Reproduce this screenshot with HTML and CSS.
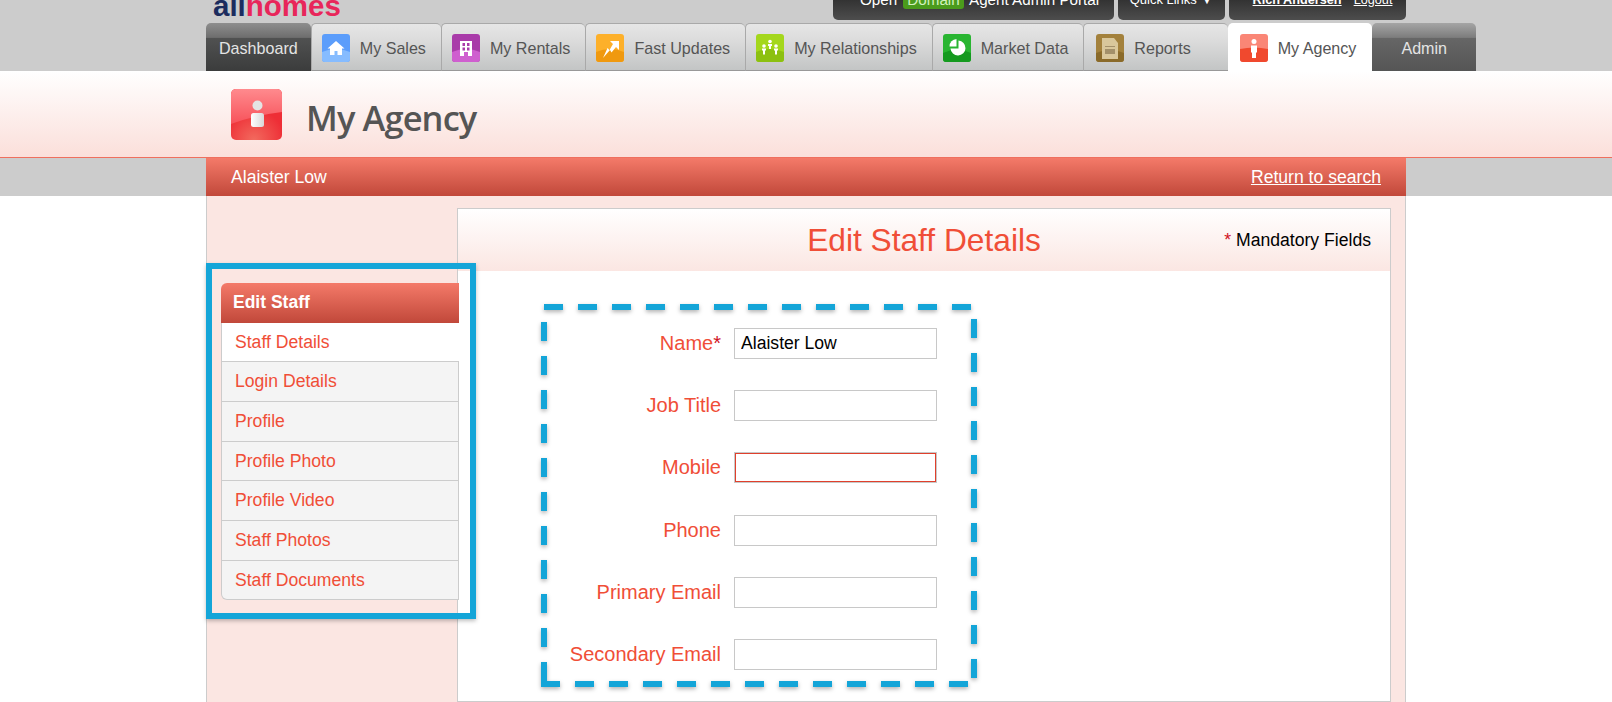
FILE: index.html
```html
<!DOCTYPE html>
<html lang="en">
<head>
  <meta charset="UTF-8">
  <meta name="viewport" content="width=device-width, initial-scale=1.0">
  <title>Edit Staff Details</title>
  <link rel="stylesheet" href="styles.css">
</head>
<body>
  <!-- Top grey bar -->
  <header class="topbar">
    <div class="wrap">
      <div class="toprow">
        <div class="logo"><span class="logo-all">all</span><span class="logo-homes">homes</span></div>
        <div class="toplinks">
          <a class="pill pill-portal" href="#">Open <span class="domain">Domain</span> Agent Admin Portal</a>
          <a class="pill pill-quick" href="#">Quick Links &#9660;</a>
          <div class="pill pill-user"><a class="user-name" href="#">Rich Andersen</a><a href="#">Logout</a></div>
        </div>
      </div>
      <nav class="tabs">
        <a class="tab tab-dark tab-dashboard" href="#">Dashboard</a>
        <a class="tab" href="#">
          <svg class="icon" viewBox="0 0 28 28"><rect width="28" height="28" rx="3" fill="#5b9dfb"/><path d="M0 18Q14 12 28 18V25a3 3 0 0 1-3 3H3a3 3 0 0 1-3-3Z" fill="#86bcff"/><path d="M14 7 5.500 14.500H8V21h4.500v-4h3v4H20v-6.500h2.500Z" fill="#fff"/></svg>
          My Sales
        </a>
        <a class="tab" href="#">
          <svg class="icon" viewBox="0 0 28 28"><rect width="28" height="28" rx="3" fill="#a93ba9"/><path d="M0 18Q14 12 28 18V25a3 3 0 0 1-3 3H3a3 3 0 0 1-3-3Z" fill="#cf5fcf"/><path d="M8 7H20V22H16V18H12V22H8Z" fill="#fff"/><path d="M10.500 9h2.500v3h-2.500ZM15 9h2.500v3H15ZM10.500 13.500h2.500v3h-2.500ZM15 13.500h2.500v3H15Z" fill="#a93ba9"/></svg>
          My Rentals
        </a>
        <a class="tab" href="#">
          <svg class="icon" viewBox="0 0 28 28"><rect width="28" height="28" rx="3" fill="#fdb02a"/><path d="M0 18Q14 12 28 18V25a3 3 0 0 1-3 3H3a3 3 0 0 1-3-3Z" fill="#f0990f"/><path d="M14 7H23V16L20 13 15.500 18.500 14 16 7 24 11.500 14 13.500 16 17 10Z" fill="#fff"/></svg>
          Fast Updates
        </a>
        <a class="tab" href="#">
          <svg class="icon" viewBox="0 0 28 28"><rect width="28" height="28" rx="3" fill="#a4d71c"/><path d="M0 18Q14 12 28 18V25a3 3 0 0 1-3 3H3a3 3 0 0 1-3-3Z" fill="#8cc010"/><g fill="#fff"><circle cx="14" cy="7.500" r="1.800"/><path d="M12 10h4v2h-1v3h-2v-3h-1Z"/><circle cx="8" cy="12" r="1.800"/><path d="M6 14.500h4v2H9v4H7v-4H6Z"/><circle cx="20" cy="12" r="1.800"/><path d="M18 14.500h4v2h-1v4h-2v-4h-1Z"/></g></svg>
          My Relationships
        </a>
        <a class="tab" href="#">
          <svg class="icon" viewBox="0 0 28 28"><rect width="28" height="28" rx="3" fill="#29b531"/><path d="M0 19Q14 12 28 19V25a3 3 0 0 1-3 3H3a3 3 0 0 1-3-3Z" fill="#159a1f"/><path d="M15.500 6.500A7.500 7.500 0 1 1 7.500 14.500H15.500Z" fill="#fff"/><path d="M13.500 5A7.500 7.500 0 0 0 6.500 12.500H13.500Z" fill="#fff"/></svg>
          Market Data
        </a>
        <a class="tab tab-reports" href="#">
          <svg class="icon" viewBox="0 0 28 28"><rect width="28" height="28" rx="3" fill="#a3813c"/><path d="M0 19Q14 13 28 19V25a3 3 0 0 1-3 3H3a3 3 0 0 1-3-3Z" fill="#8a6a2a"/><path d="M6 4H18L22 9V25H6Z" fill="#d9c79b"/><path d="M9 12h10v1H9ZM9 15h10v5H9Z" fill="#a3906a"/></svg>
          Reports
        </a>
        <a class="tab tab-active" href="#">
          <svg class="icon" viewBox="0 0 28 28"><rect width="28" height="28" rx="3" fill="#fa8676"/><path d="M0 15Q14 12 28 15V25a3 3 0 0 1-3 3H3a3 3 0 0 1-3-3Z" fill="#f0492e"/><circle cx="14" cy="7.500" r="2.500" fill="#fff"/><path d="M11 11.500h6v7h-1V24h-4v-5.500h-1Z" fill="#fff"/></svg>
          My Agency
        </a>
        <a class="tab tab-dark tab-admin" href="#">Admin</a>
      </nav>
    </div>
  </header>

  <!-- Section banner -->
  <div class="banner">
    <div class="wrap banner-inner">
      <svg class="banner-icon" viewBox="0 0 51 51">
        <defs>
          <linearGradient id="agency-top" x1="0" y1="0" x2="0" y2="1"><stop offset="0" stop-color="#ff8a8e"/><stop offset="1" stop-color="#f7525a"/></linearGradient>
          <radialGradient id="agency-glow" cx=".45" cy="1" r=".6"><stop offset="0" stop-color="#f26a5e"/><stop offset="1" stop-color="#ee2e36"/></radialGradient>
          <linearGradient id="agency-body" x1="0" y1="0" x2="1" y2="0"><stop offset="0" stop-color="#fff"/><stop offset="1" stop-color="#d8d8d8"/></linearGradient>
        </defs>
        <rect width="51" height="51" rx="5" fill="url(#agency-glow)"/>
        <path d="M0 5a5 5 0 0 1 5-5H46a5 5 0 0 1 5 5V23Q25 26 0 35Z" fill="url(#agency-top)"/>
        <circle cx="26.500" cy="16.500" r="5" fill="#e4e4e4"/>
        <rect x="20" y="24" width="13" height="14" rx="2.500" fill="url(#agency-body)"/>
      </svg>
      <h1 class="banner-title">My Agency</h1>
    </div>
  </div>

  <!-- Red title bar -->
  <div class="subbar">
    <div class="wrap subbar-inner">
      <span>Alaister Low</span>
      <a href="#">Return to search</a>
    </div>
  </div>

  <div class="wrap content">
    <aside class="side">
      <div class="menu">
        <div class="menu-head">Edit Staff</div>
        <a class="menu-item menu-current" href="#">Staff Details</a>
        <a class="menu-item" href="#">Login Details</a>
        <a class="menu-item" href="#">Profile</a>
        <a class="menu-item" href="#">Profile Photo</a>
        <a class="menu-item" href="#">Profile Video</a>
        <a class="menu-item" href="#">Staff Photos</a>
        <a class="menu-item" href="#">Staff Documents</a>
      </div>
    </aside>

    <main class="panel">
      <div class="panel-head">
        <h2>Edit Staff Details</h2>
        <div class="mandatory"><span class="star">*</span> Mandatory Fields</div>
      </div>
      <form class="staff-form">
        <div class="form-row">
          <label for="name">Name<span class="star">*</span></label>
          <input type="text" id="name" value="Alaister Low">
        </div>
        <div class="form-row">
          <label for="job-title">Job Title</label>
          <input type="text" id="job-title">
        </div>
        <div class="form-row">
          <label for="mobile">Mobile</label>
          <input type="text" id="mobile" class="input-error">
        </div>
        <div class="form-row">
          <label for="phone">Phone</label>
          <input type="text" id="phone">
        </div>
        <div class="form-row">
          <label for="primary-email">Primary Email</label>
          <input type="text" id="primary-email">
        </div>
        <div class="form-row">
          <label for="secondary-email">Secondary Email</label>
          <input type="text" id="secondary-email">
        </div>
      </form>
    </main>

    <!-- Blue annotations drawn over the screenshot -->
    <div class="note-frame"></div>
    <svg class="note-dashes" viewBox="0 0 440 390">
      <path d="M3 3H430M433 15V376M3 18V380M0 380H430"/>
    </svg>
  </div>
</body>
</html>
```

FILE: styles.css
```css
html, body {
  height: 702px;
  overflow: hidden;
}
body {
  margin: 0;
  font-family: "Liberation Sans", Arial, sans-serif;
  background-color: #fff;
}
a {
  color: inherit;
  text-decoration: none;
}
.wrap {
  width: 1200px;
  margin: 0 auto;
}

/* Top bar */
.topbar {
  background-color: #ccc;
  height: 71px;
}
.toprow {
  display: flex;
  justify-content: space-between;
  height: 23px;
  overflow: hidden;
}
.logo {
  margin-left: 7px;
  margin-top: -11px;
  font-size: 29.500px;
  font-weight: bold;
  line-height: 33px;
}
.logo-all {
  color: #1b2c5e;
}
.logo-homes {
  color: #e8265a;
}
.toplinks {
  display: flex;
  gap: 4px;
  height: 20px;
}
.pill {
  display: flex;
  align-items: flex-end;
  justify-content: center;
  height: 20px;
  box-sizing: border-box;
  background: linear-gradient(#333, #4d4d4d);
  border-radius: 0 0 5px 5px;
  color: #fff;
  white-space: pre;
}
.pill-portal {
  width: 281px;
  font-size: 15.200px;
  line-height: 18px;
  padding-bottom: 11px;
  padding-left: 12px;
}
.domain {
  background-color: #4b9b1c;
  color: #d2f2bc;
  border-radius: 3px;
  padding: 0 4px;
  margin: 0 2px;
}
.pill-quick {
  width: 107px;
  font-size: 13px;
  line-height: 14px;
  padding-bottom: 13px;
}
.pill-user {
  width: 177px;
  font-size: 12.700px;
  line-height: 14px;
  padding-bottom: 13px;
  padding-left: 10px;
  gap: 12px;
}
.pill-user a {
  text-decoration: underline;
}
.user-name {
  font-weight: bold;
}

/* Tabs */
.tabs {
  display: flex;
  width: 1271px;
  height: 48px;
}
.tab {
  display: flex;
  flex: none;
  align-items: center;
  gap: 10px;
  box-sizing: border-box;
  height: 48px;
  padding: 2px 15px 0 10px;
  background: linear-gradient(#e6e6e6, #dcdcdc 35%, #c3c5c5);
  border-top: 1px solid #a9a9a9;
  border-left: 1px solid #a9a9a9;
  border-bottom: 1px solid #999;
  border-radius: 5px 5px 0 0;
  color: #555;
  font-size: 16.100px;
  white-space: nowrap;
}
.icon {
  width: 28px;
  height: 28px;
  flex: none;
}
.tab-dark {
  border: none;
  color: #e4e4e4;
}
.tab-dashboard {
  padding: 2px 13px 0;
  background: linear-gradient(#8e8e8e, #6e6e6e 30%, #505151 32%, #3b3c3c);
}
.tab-admin {
  padding: 2px 29px 0;
  background: linear-gradient(#a5a5a5, #7d7d7d 30%, #666 32%, #555);
}
.tab-reports {
  padding-left: 12px;
  padding-right: 37px;
}
.tab-active {
  background: #fff;
  border: none;
  padding-left: 12px;
  padding-right: 16px;
}

/* Banner */
.banner {
  height: 86px;
  background: linear-gradient(#fff, #fbdfda);
  border-bottom: 1px solid #ef6f5e;
}
.banner-inner {
  display: flex;
  align-items: center;
  height: 86px;
}
.banner-icon {
  width: 51px;
  height: 51px;
  margin-left: 25px;
}
.banner-title {
  margin: 6px 0 0 24px;
  font-family: "Open Sans", sans-serif;
  font-size: 34.500px;
  font-weight: 600;
  color: #555;
  letter-spacing: -0.9px;
}

/* Red bar */
.subbar {
  background-color: #ccc;
}
.subbar-inner {
  display: flex;
  justify-content: space-between;
  align-items: center;
  box-sizing: border-box;
  height: 38px;
  padding: 0 25px;
  background: linear-gradient(#f47a69, #c1483a);
  color: #fff;
  font-size: 17.600px;
}
.subbar-inner a {
  text-decoration: underline;
}

/* Content */
.content {
  position: relative;
  display: flex;
  box-sizing: border-box;
  height: 506px;
  background-color: #fbe6e2;
  border-left: 1px solid #ccc;
  border-right: 1px solid #ccc;
}
.side {
  width: 250px;
  flex: none;
  box-sizing: border-box;
  padding: 87px 0 0 14px;
}
.menu {
  position: relative;
  z-index: 1;
  width: 238px;
}
.menu-head {
  height: 39.500px;
  padding-left: 12px;
  background: linear-gradient(#f47a69, #c1483a);
  border-radius: 6px 0 0 0;
  color: #fff;
  font-size: 17.500px;
  font-weight: bold;
  line-height: 39px;
}
.menu-item {
  display: block;
  box-sizing: border-box;
  height: 39.700px;
  padding-left: 13px;
  background-color: #f4f4f4;
  border-left: 1px solid #ccc;
  border-right: 1px solid #ccc;
  border-bottom: 1px solid #ccc;
  color: #f04e37;
  font-size: 17.600px;
  line-height: 39px;
}
.menu-current {
  background-color: #fff;
  border-right: none;
}
.menu-item:last-child {
  border-radius: 0 0 0 6px;
}
.panel {
  width: 932px;
  margin-top: 12px;
  background-color: #fff;
  border: 1px solid #ccc;
}
.panel-head {
  position: relative;
  height: 62px;
  background: linear-gradient(#fff, #fbe6e2);
  text-align: center;
}
.panel-head h2 {
  margin: 0;
  color: #f04e37;
  font-size: 31.700px;
  font-weight: normal;
  line-height: 62px;
}
.mandatory {
  position: absolute;
  right: 19px;
  top: 21px;
  font-size: 17.600px;
  color: #000;
}
.star {
  color: #d0121f;
}
.staff-form {
  padding-top: 57px;
}
.form-row {
  display: flex;
  align-items: center;
  gap: 13px;
  height: 31px;
  margin-bottom: 31.200px;
}
.form-row label {
  width: 263px;
  color: #f04e37;
  font-size: 20px;
  text-align: right;
}
.form-row input {
  width: 203px;
  height: 31px;
  box-sizing: border-box;
  margin: 0;
  padding: 0 6px;
  border: 1px solid #c8c8c8;
  border-radius: 0;
  outline: none;
  color: #000;
  font-family: "Liberation Sans", Arial, sans-serif;
  font-size: 17.600px;
}
.form-row .input-error {
  box-shadow: inset 0 0 0 1px #e0402c;
}

/* Annotations */
.note-frame {
  position: absolute;
  z-index: 2;
  left: -1px;
  top: 67px;
  width: 270px;
  height: 356px;
  box-sizing: border-box;
  border: 6px solid #14a5d8;
  box-shadow: 0 2px 4px rgba(0, 0, 0, 0.25);
}
.note-dashes {
  position: absolute;
  z-index: 2;
  left: 334px;
  top: 108px;
  width: 440px;
  height: 390px;
  overflow: visible;
  fill: none;
  stroke: #14a5d8;
  stroke-width: 6;
  stroke-dasharray: 19 15;
  filter: drop-shadow(0 2px 2px rgba(0, 0, 0, 0.3));
}
```
